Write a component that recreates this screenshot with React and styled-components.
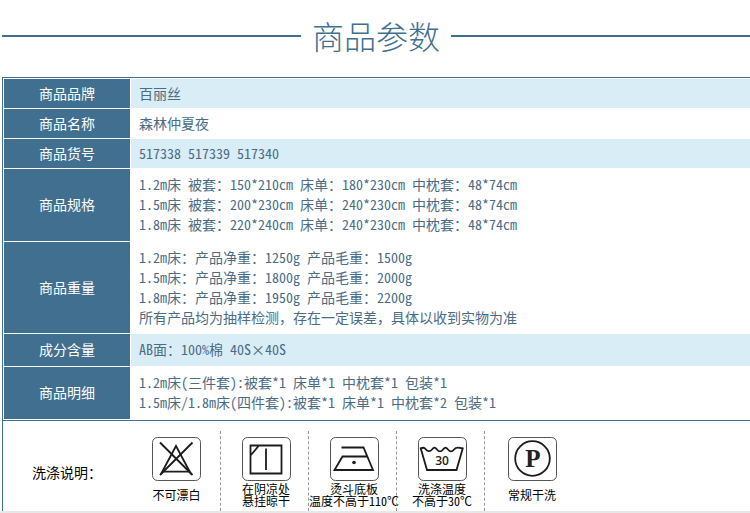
import styled, { createGlobalStyle } from "styled-components";

const GlobalStyle = createGlobalStyle`
  * {
    box-sizing: border-box;
  }
  body {
    margin: 0;
    background-color: #fff;
    color: #4a6c86;
    font-family: "Noto Sans CJK SC", sans-serif;
    font-size: 14px;
    line-height: 20px;
    /* half-width latin and digits, so they line up with the hanzi grid */
    font-feature-settings: "hwid";
  }
`;

const Page = styled.main`
  padding-left: 2px;
  border-bottom: 2px solid #e8e8e8;
  overflow: hidden;
`;

const Heading = styled.header`
  display: flex;
  align-items: center;
  gap: 11px;
  height: 72px;
  margin-bottom: 5px;

  &::before,
  &::after {
    content: "";
    flex: 1;
    height: 2px;
    background-color: #406f8f;
  }
`;

const Title = styled.h1`
  margin: 0;
  padding-bottom: 2px;
  color: #406f8f;
  font-size: 32px;
  font-weight: 300;
  line-height: 40px;
`;

const Table = styled.table`
  width: calc(100% + 1px);
  border: 1px solid #406f8f;
  border-right: none;
  border-spacing: 1px;
`;

const Row = styled.tr`
  height: ${(props) => props.$height}px;
  background-color: ${(props) => (props.$tinted ? "#d9edf7" : "#fff")};
`;

const Label = styled.th`
  width: 126px;
  padding: 0 0 2px;
  background-color: #406f8f;
  color: #fff;
  font-weight: 400;
`;

const Value = styled.td`
  padding: 0 8px 2px;
`;

const Line = styled.div`
  white-space: nowrap;
  font-feature-settings: ${(props) => (props.$prose ? "normal" : "inherit")};
`;

const Care = styled.section`
  display: flex;
  align-items: stretch;
  height: 90px;
  padding-top: 10px;
  border-left: 1px solid #406f8f;
  color: #000;
`;

const CareTitle = styled.h2`
  width: 127px;
  margin: 0;
  padding: 31px 0 0 29px;
  font-size: 14px;
  font-weight: 400;
`;

const CareList = styled.ul`
  display: flex;
  margin: 0;
  padding: 0;
  list-style: none;
`;

const CareItem = styled.li`
  display: flex;
  flex-direction: column;
  align-items: center;
  gap: 1px;
  width: 88px;
  padding: 6px 0 0 3px;

  &:first-child {
    width: 90px;
  }
  &:last-child {
    width: 92px;
  }
  & + & {
    border-left: 1px dashed #999;
  }
`;

const Caption = styled.div`
  display: flex;
  align-items: center;
  height: 26px;
  font-size: 12px;
  line-height: 12px;
  text-align: center;
  white-space: pre;
`;

const Symbol = styled.svg`
  display: block;
  flex: none;
  width: 49px;
  height: 44px;
  fill: none;
  stroke: #1c1c1c;
  stroke-width: 1.8;

  text {
    fill: #222;
    stroke: none;
    text-anchor: middle;
  }
`;

const rows = [
  { label: "商品品牌", height: 29, tinted: true, lines: ["百丽丝"] },
  { label: "商品名称", height: 29, lines: ["森林仲夏夜"] },
  {
    label: "商品货号",
    height: 29,
    tinted: true,
    lines: ["517338 517339 517340"],
  },
  {
    label: "商品规格",
    height: 72,
    lines: [
      "1.2m床 被套：150*210cm 床单：180*230cm 中枕套：48*74cm",
      "1.5m床 被套：200*230cm 床单：240*230cm 中枕套：48*74cm",
      "1.8m床 被套：220*240cm 床单：240*230cm 中枕套：48*74cm",
    ],
  },
  {
    label: "商品重量",
    height: 91,
    lines: [
      "1.2m床：产品净重：1250g 产品毛重：1500g",
      "1.5m床：产品净重：1800g 产品毛重：2000g",
      "1.8m床：产品净重：1950g 产品毛重：2200g",
    ],
    note: "所有产品均为抽样检测，存在一定误差，具体以收到实物为准",
  },
  {
    label: "成分含量",
    height: 32,
    tinted: true,
    lines: ["AB面：100%棉 40S×40S"],
  },
  {
    label: "商品明细",
    height: 52,
    lines: [
      "1.2m床(三件套):被套*1 床单*1 中枕套*1 包装*1",
      "1.5m床/1.8m床(四件套):被套*1 床单*1 中枕套*2 包装*1",
    ],
  },
];

const care = [
  {
    caption: "不可漂白",
    drawing: (
      <>
        <path d="M8 5.5 40.5 38M40.5 5.5 8 38" />
        <path d="M9 37 24 9 39 37M10 34.7H38.5" />
      </>
    ),
  },
  {
    caption: "在阴凉处\n悬挂晾干",
    drawing: (
      <>
        <path d="M8.5 8.5H39.5V36.5H8.5ZM8.5 18.5 17 8.5" />
        <path d="M24 11.5V33" />
      </>
    ),
  },
  {
    caption: "烫斗底板\n温度不高于110℃",
    drawing: (
      <>
        <path d="M11.5 10.5H33.5L43 33H4.5L12.5 19.5H37" />
        <circle cx="24" cy="25.5" r="1.8" fill="#1c1c1c" stroke="none" />
      </>
    ),
  },
  {
    caption: "洗涤温度\n不高于30℃",
    drawing: (
      <>
        <path d="M2.5 10.5 9 33H38.5L45 10.5" />
        <path d="M3 11.5C5 10 6.5 10.5 8 12.5S12 15 14 12.5 17 10 19 12.5 23 15 25 12.5 28 10 30 12.5 34 15 36 12.5 40 10 44.5 11.5" />
        <text
          x="24"
          y="28"
          fontSize="12"
          fontWeight="600"
          fontFamily="'Open Sans', sans-serif"
        >
          30
        </text>
      </>
    ),
  },
  {
    caption: "常规干洗",
    drawing: (
      <>
        <circle cx="24.5" cy="21.5" r="17.3" />
        <text
          x="25"
          y="29.5"
          fontSize="25"
          fontWeight="700"
          fontFamily="'Liberation Serif', serif"
        >
          P
        </text>
      </>
    ),
  },
];

function ParameterTable() {
  return (
    <Table>
      <tbody>
        {rows.map((row) => (
          <Row key={row.label} $height={row.height} $tinted={row.tinted}>
            <Label scope="row">{row.label}</Label>
            <Value>
              {row.lines.map((line) => (
                <Line key={line}>{line}</Line>
              ))}
              {row.note && <Line $prose>{row.note}</Line>}
            </Value>
          </Row>
        ))}
      </tbody>
    </Table>
  );
}

function CareGuide() {
  return (
    <Care>
      <CareTitle>洗涤说明：</CareTitle>
      <CareList>
        {care.map((item) => (
          <CareItem key={item.caption}>
            <Symbol viewBox="0 0 49 44" aria-hidden="true">
              <rect
                x="0.5"
                y="0.5"
                width="48"
                height="43"
                rx="5"
                stroke="#555"
                strokeWidth="1"
              />
              {item.drawing}
            </Symbol>
            <Caption>{item.caption}</Caption>
          </CareItem>
        ))}
      </CareList>
    </Care>
  );
}

function App() {
  return (
    <>
      <GlobalStyle />
      <Page>
        <Heading>
          <Title>商品参数</Title>
        </Heading>
        <ParameterTable />
        <CareGuide />
      </Page>
    </>
  );
}

export default App;
